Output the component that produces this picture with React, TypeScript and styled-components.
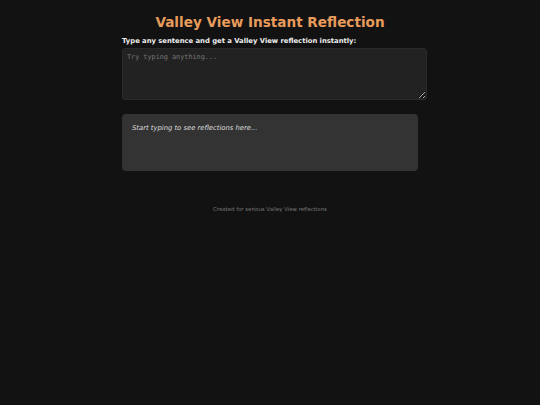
import React, { useState } from "react";
import styled, { createGlobalStyle } from "styled-components";

const Global = createGlobalStyle`
  html, body { margin: 0; padding: 0; background: #121212; }
  body { font-family: "DejaVu Sans", Verdana, sans-serif; color: #eee; }
`;

const Page = styled.div`
  display: flex;
  flex-direction: column;
  align-items: center;
  padding-top: 14px;
`;

const Title = styled.h1`
  margin: 0 0 7px;
  font-size: 13.6px;
  font-weight: bold;
  color: #e89c5c;
  text-align: center;
`;

const Container = styled.div`
  width: 296px;
  display: flex;
  flex-direction: column;
`;

const Label = styled.label`
  font-size: 6.8px;
  font-weight: bold;
  color: #eee;
  margin-bottom: 3px;
`;

const Input = styled.textarea`
  box-sizing: border-box;
  width: 305px;
  height: 52px;
  background: #222;
  border: 1px solid #2a2a2a;
  border-radius: 3px;
  color: #ddd;
  color-scheme: dark;
  font-family: "DejaVu Sans Mono", monospace;
  font-size: 6.8px;
  padding: 4px 4px;
  resize: vertical;
  outline: none;
  &::placeholder { color: #777; }
`;

const Output = styled.div`
  box-sizing: border-box;
  width: 296px;
  height: 57px;
  margin-top: 14px;
  background: #333;
  border-radius: 4px;
  padding: 10px 10px;
  font-size: 6.8px;
  font-style: italic;
  color: #ddd;
`;

const Footer = styled.div`
  margin-top: 35px;
  font-size: 5.4px;
  color: #777;
  text-align: center;
`;

export default function App() {
  const [text, setText] = useState("");
  return (
    <>
      <Global />
      <Page>
        <Title>Valley View Instant Reflection</Title>
        <Container>
          <Label>Type any sentence and get a Valley View reflection instantly:</Label>
          <Input
            placeholder="Try typing anything..."
            value={text}
            onChange={(e) => setText(e.target.value)}
          />
          <Output>{text ? text : "Start typing to see reflections here..."}</Output>
        </Container>
        <Footer>Created for serious Valley View reflections</Footer>
      </Page>
    </>
  );
}
